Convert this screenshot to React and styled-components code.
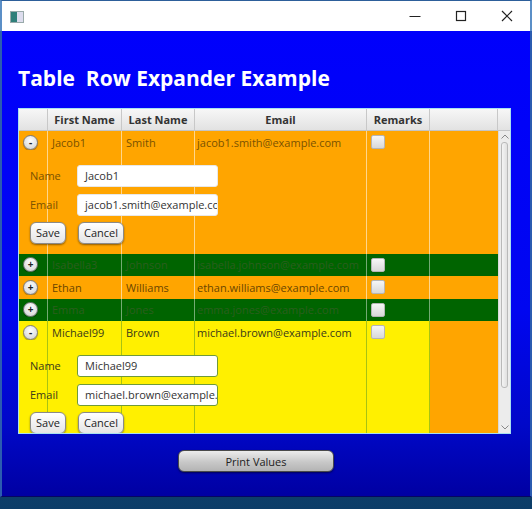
import React from "react";
import styled, { createGlobalStyle } from "styled-components";

const GlobalStyle = createGlobalStyle`
  html, body {
    margin: 0;
    padding: 0;
    background: #0b3f6e;
  }
  * {
    box-sizing: border-box;
  }
`;

const COLS = [29, 74, 73, 172, 63];

const Frame = styled.div`
  width: 532px;
  height: 509px;
  display: flex;
  flex-direction: column;
  font-family: "Open Sans", "Noto Sans", sans-serif;
  overflow: hidden;
  background: linear-gradient(to bottom, #1f6f90, #0c3d68);
`;

const TitleBar = styled.div`
  height: 31px;
  flex: none;
  background: #fff;
  border-top: 1px solid #2d5f9a;
  border-left: 2px solid #5b8fc7;
  border-right: 2px solid #5b8fc7;
  display: flex;
  align-items: center;
  padding-left: 8px;
`;

const AppIcon = styled.div`
  width: 14px;
  height: 12px;
  border: 1px solid #9aa;
  background: linear-gradient(to right, #2f7f7a 0, #2f7f7a 6px, #dde 6px);
  margin-top: 2px;
`;

const Controls = styled.div`
  margin-left: auto;
  display: flex;
  height: 100%;
`;

const Ctl = styled.div`
  width: 46px;
  height: 100%;
  display: flex;
  align-items: center;
  justify-content: center;
`;

const Body = styled.div`
  height: 466px;
  flex: none;
  background: linear-gradient(to bottom, #0000fc 0%, #0006f0 60%, #0008c8 85%, #0000a2 100%);
  border-left: 2px solid #2b5cb0;
  border-right: 2px solid #2b5cb0;
  border-bottom: 1px solid #060660;
  padding: 34px 19px 0 16px;
  display: flex;
  flex-direction: column;
`;

const Heading = styled.h1`
  margin: 0 0 17px 0;
  font-size: 21px;
  line-height: 26px;
  font-weight: 700;
  color: #fff;
  white-space: pre;
`;

const Table = styled.div`
  width: 493px;
  height: 326px;
  border: 1px solid #a8e0f0;
  background: #f0f0f0;
  display: flex;
  flex-direction: column;
  overflow: hidden;
`;

const HeaderRow = styled.div`
  height: 22px;
  flex: none;
  display: flex;
  background: linear-gradient(to bottom, #f7f7f7, #e2e2e2);
  border-bottom: 1px solid #c4c4c4;
`;

const HeadCell = styled.div`
  width: ${(p) => p.$w}px;
  flex: none;
  border-right: 1px solid ${(p) => (p.$last ? "transparent" : "#c8c8c8")};
  font-size: 11px;
  font-weight: 700;
  color: #333;
  display: flex;
  align-items: center;
  justify-content: center;
  white-space: nowrap;
`;

const Grid = styled.div`
  flex: 1;
  display: flex;
  overflow: hidden;
`;

const Rows = styled.div`
  width: 479px;
  flex: none;
  overflow: hidden;
`;

const linesBg = (c) => {
  let x = 0;
  return COLS.map((w) => {
    x += w;
    return `linear-gradient(${c}, ${c}) ${x - 1}px 0 / 1px 100% no-repeat`;
  }).join(", ");
};

const Row = styled.div`
  display: flex;
`;

const RowMain = styled.div`
  width: 411px;
  flex: none;
  background: ${(p) => linesBg(p.$line)}, ${(p) => p.$bg};
  color: ${(p) => p.$fg};
`;

const Filler = styled.div`
  flex: 1;
  background: ${(p) => p.$bg};
`;

const Line = styled.div`
  height: 22.5px;
  display: flex;
  align-items: center;
`;

const Cell = styled.div`
  width: ${(p) => p.$w}px;
  flex: none;
  padding-left: ${(p) => p.$pad ?? 4}px;
  font-size: 11px;
  white-space: nowrap;
  overflow: hidden;
  display: flex;
  align-items: center;
`;

const Toggle = styled.div`
  width: 15px;
  height: 15px;
  border-radius: 50%;
  background: radial-gradient(circle at 50% 35%, #ffffff, #dcdcdc 70%, #b8b8b8);
  border: 1px solid #7a7a7a;
  box-shadow: 0 1px 1px rgba(0, 0, 0, 0.35);
  font-size: 10px;
  font-weight: 700;
  line-height: 12px;
  color: #222;
  text-align: center;
`;

const Check = styled.div`
  width: 14px;
  height: 14px;
  border-radius: 2px;
  background: linear-gradient(to bottom, #f6f6f6, #d8d8d8);
  border: 1px solid #b5b5b5;
`;

const Detail = styled.div`
  padding: 11px 0 10px 11px;
  display: flex;
  flex-direction: column;
  gap: 7px;
`;

const Field = styled.div`
  display: flex;
  align-items: center;
`;

const Label = styled.div`
  width: 47px;
  font-size: 11px;
`;

const Input = styled.div`
  width: 141px;
  height: 22px;
  background: #fff;
  border-radius: 3px;
  border: 1px solid ${(p) => p.$border};
  font-size: 11px;
  color: #333;
  padding-left: 7px;
  display: flex;
  align-items: center;
  white-space: nowrap;
  overflow: hidden;
`;

const Buttons = styled.div`
  display: flex;
  gap: 12px;
  margin-top: -1px;
`;

const SmallButton = styled.div`
  width: ${(p) => p.$w}px;
  height: 22px;
  border-radius: 6px;
  background: linear-gradient(to bottom, #ffffff, #e4e4e4);
  border: 1px solid #8a8a8a;
  box-shadow: 0 1px 2px rgba(0, 0, 0, 0.45);
  font-size: 11px;
  color: #222;
  display: flex;
  align-items: center;
  justify-content: center;
`;

const ScrollBar = styled.div`
  flex: 1;
  background: #ececec;
  border-left: 1px solid #dadada;
  display: flex;
  flex-direction: column;
  align-items: center;
`;

const Arrow = styled.div`
  height: 11px;
  flex: none;
  display: flex;
  align-items: center;
  justify-content: center;
`;

const Thumb = styled.div`
  width: 7px;
  height: 246px;
  border-radius: 3px;
  border: 1px solid #b9b9b9;
  background: linear-gradient(to right, #f4f4f4, #e0e0e0);
`;

const Spacer = styled.div`
  flex: 1;
`;

const Footer = styled.div`
  display: flex;
  justify-content: center;
  padding: 16px 17px 0 0;
`;

const PrintButton = styled.div`
  width: 156px;
  height: 22px;
  border-radius: 6px;
  border: 1px solid #4a4a4a;
  background: linear-gradient(to bottom, #ececec, #c8c8c8 55%, #b4b4b4);
  box-shadow: 0 1px 2px rgba(0, 0, 0, 0.5);
  font-size: 11px;
  color: #222;
  display: flex;
  align-items: center;
  justify-content: center;
`;

const people = [
  {
    first: "Jacob1",
    last: "Smith",
    email: "jacob1.smith@example.com",
    expanded: true,
    bg: "#ffa500",
    filler: "#ffa500",
    fg: "#7a5200",
    line: "rgba(255,255,255,0.55)",
    border: "#e8e8e8",
  },
  {
    first: "Isabella3",
    last: "Johnson",
    email: "isabella.johnson@example.com",
    bg: "#006400",
    filler: "#006400",
    fg: "#2b5e1f",
    line: "rgba(255,255,255,0.45)",
  },
  {
    first: "Ethan",
    last: "Williams",
    email: "ethan.williams@example.com",
    bg: "#ffa500",
    filler: "#ffa500",
    fg: "#6a4600",
    line: "rgba(255,255,255,0.55)",
  },
  {
    first: "Emma",
    last: "Jones",
    email: "emma.jones@example.com",
    bg: "#006400",
    filler: "#006400",
    fg: "#2b5e1f",
    line: "rgba(255,255,255,0.45)",
  },
  {
    first: "Michael99",
    last: "Brown",
    email: "michael.brown@example.com",
    expanded: true,
    bg: "#fff000",
    filler: "#ffa500",
    fg: "#3a3a1a",
    line: "rgba(60,140,40,0.45)",
    border: "#6f9a3a",
  },
];

const headers = ["", "First Name", "Last Name", "Email", "Remarks"];

export default function App() {
  return (
    <>
      <GlobalStyle />
      <Frame>
        <TitleBar>
          <AppIcon />
          <Controls>
            <Ctl>
              <svg width="12" height="12" viewBox="0 0 12 12">
                <line x1="0.5" y1="6.5" x2="11.5" y2="6.5" stroke="#222" strokeWidth="1" />
              </svg>
            </Ctl>
            <Ctl>
              <svg width="12" height="12" viewBox="0 0 12 12">
                <rect x="1.5" y="1.5" width="9" height="9" fill="none" stroke="#222" strokeWidth="1.2" />
              </svg>
            </Ctl>
            <Ctl>
              <svg width="12" height="12" viewBox="0 0 12 12">
                <path d="M1 1L11 11M11 1L1 11" stroke="#222" strokeWidth="1.2" />
              </svg>
            </Ctl>
          </Controls>
        </TitleBar>
        <Body>
          <Heading>Table  Row Expander Example</Heading>
          <Table>
            <HeaderRow>
              {headers.map((h, i) => (
                <HeadCell key={i} $w={COLS[i]}>
                  {h}
                </HeadCell>
              ))}
              <HeadCell $w={68} />
              <HeadCell $w={12} $last />
            </HeaderRow>
            <Grid>
              <Rows>
                {people.map((p) => (
                  <Row key={p.first}>
                    <RowMain $bg={p.bg} $fg={p.fg} $line={p.line}>
                      <Line>
                        <Cell $w={COLS[0]} $pad={4}>
                          <Toggle>{p.expanded ? "-" : "+"}</Toggle>
                        </Cell>
                        <Cell $w={COLS[1]}>{p.first}</Cell>
                        <Cell $w={COLS[2]}>{p.last}</Cell>
                        <Cell $w={COLS[3]} $pad={2}>
                          {p.email}
                        </Cell>
                        <Cell $w={COLS[4]} $pad={4}>
                          <Check />
                        </Cell>
                      </Line>
                      {p.expanded && (
                        <Detail>
                          <Field>
                            <Label>Name</Label>
                            <Input $border={p.border}>{p.first}</Input>
                          </Field>
                          <Field>
                            <Label>Email</Label>
                            <Input $border={p.border}>{p.email}</Input>
                          </Field>
                          <Buttons>
                            <SmallButton $w={36}>Save</SmallButton>
                            <SmallButton $w={46}>Cancel</SmallButton>
                          </Buttons>
                        </Detail>
                      )}
                    </RowMain>
                    <Filler $bg={p.filler} />
                  </Row>
                ))}
              </Rows>
              <ScrollBar>
                <Arrow>
                  <svg width="8" height="5" viewBox="0 0 8 5">
                    <path d="M0.5 4.5L4 1L7.5 4.5" fill="none" stroke="#888" strokeWidth="1" />
                  </svg>
                </Arrow>
                <Thumb />
                <Spacer />
                <Arrow>
                  <svg width="8" height="5" viewBox="0 0 8 5">
                    <path d="M0.5 0.5L4 4L7.5 0.5" fill="none" stroke="#888" strokeWidth="1" />
                  </svg>
                </Arrow>
              </ScrollBar>
            </Grid>
          </Table>
          <Footer>
            <PrintButton>Print Values</PrintButton>
          </Footer>
        </Body>
      </Frame>
    </>
  );
}
